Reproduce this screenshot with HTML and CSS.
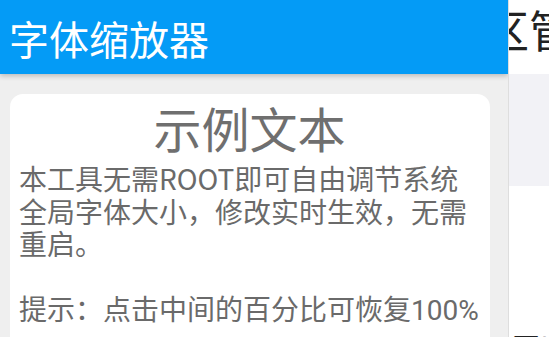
FILE: index.html
```html
<!DOCTYPE html>
<html lang="zh-CN">
<head>
<meta charset="utf-8">
<title>字体缩放器</title>
<link rel="stylesheet" href="styles.css">
</head>
<body>
<div class="screen">
  <div class="app">
    <header class="appbar">字体缩放器</header>
    <main class="content">
      <section class="card">
        <h1 class="title">示例文本</h1>
        <p class="body">本工具无需ROOT即可自由调节系统<br>全局字体大小，修改实时生效，无需<br>重启。<br><br>提示：点击中间的百分比可恢复<span class="num">100%</span></p>
      </section>
    </main>
  </div>
  <aside class="side">
    <div class="side-top"><span class="side-title">区管</span></div>
    <div class="side-band"></div>
    <div class="side-rest"><span class="side-text">开!</span></div>
  </aside>
</div>
</body>
</html>
```
FILE: styles.css
```css
html, body {
  margin: 0;
  padding: 0;
}
body {
  width: 549px;
  height: 337px;
  overflow: hidden;
  font-family: "Noto Sans CJK SC", "Noto Sans", sans-serif;
  background: #ffffff;
}
.screen {
  display: flex;
  width: 549px;
  height: 337px;
}
.app {
  width: 508px;
  flex: none;
  display: flex;
  flex-direction: column;
  background: #efefef;
  overflow: hidden;
}
.appbar {
  position: relative;
  z-index: 1;
  height: 74px;
  flex: none;
  box-sizing: border-box;
  padding-left: 9px;
  background: #049bf6;
  color: #ffffff;
  font-size: 40px;
  line-height: 76px;
  white-space: nowrap;
  box-shadow: 0 2px 5px rgba(0, 0, 0, 0.22);
}
.content {
  flex: 1;
  padding: 20px 0 0 10px;
}
.card {
  width: 480px;
  height: 300px;
  box-sizing: border-box;
  background: #ffffff;
  border-radius: 13px;
  padding: 5px 10px 0 9px;
}
.title {
  margin: 0;
  font-size: 48px;
  font-weight: normal;
  line-height: 56px;
  text-align: center;
  color: #6f6f6f;
}
.body {
  margin: 7px 0 0;
  font-size: 28px;
  line-height: 32.5px;
  color: #6a6a6a;
  white-space: nowrap;
}
.num {
  font-family: Roboto, "Noto Sans CJK SC", sans-serif;
}
.side {
  flex: 1;
  display: flex;
  flex-direction: column;
  border-left: 1px solid #dedede;
  background: #ffffff;
  overflow: hidden;
}
.side-top {
  height: 74px;
  flex: none;
  white-space: nowrap;
  overflow: hidden;
}
.side-title {
  display: block;
  margin-left: -24px;
  font-size: 44px;
  line-height: 58px;
  color: #222222;
}
.side-band {
  height: 112px;
  flex: none;
  background: #f2f2f6;
}
.side-rest {
  flex: 1;
  padding: 144px 0 0 3px;
  white-space: nowrap;
  overflow: hidden;
}
.side-text {
  font-size: 28px;
  line-height: 32px;
  color: #222222;
}
```
